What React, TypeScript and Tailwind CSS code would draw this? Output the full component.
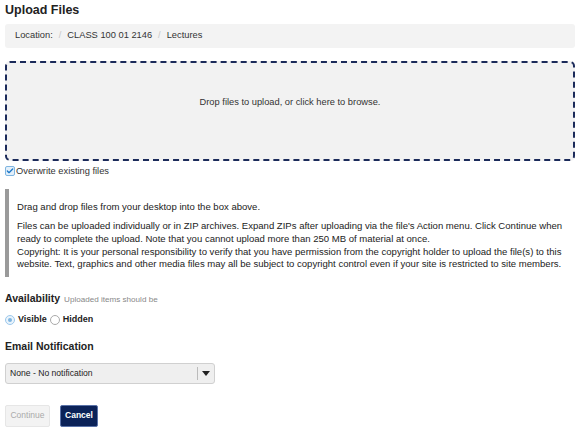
import { Check } from 'lucide-react'

export default function App() {
  return (
    <div className="w-[581px] h-[430px] bg-white px-[5px] pt-[2px] text-[#333] font-['Liberation_Sans',Arial,sans-serif] overflow-hidden">
      {/* Title */}
      <h1 className="text-[12.5px] font-bold text-[#222] leading-[16px]">Upload Files</h1>

      {/* Breadcrumb */}
      <div className="mt-[6px] h-[24px] w-[570px] bg-[#f3f3f3] rounded-[3px] flex items-center pl-[10px] text-[9.3px] text-[#333]">
        <span>Location:</span>
        <span className="mx-[6px] text-[#c8c8c8]">/</span>
        <span>CLASS 100 01 2146</span>
        <span className="mx-[6px] text-[#c8c8c8]">/</span>
        <span>Lectures</span>
      </div>

      {/* Dropzone */}
      <div className="mt-[13px] h-[100px] w-[570px] bg-[#f2f2f2] border-2 border-dashed border-[#1b2a5a] rounded-[5px] flex items-start justify-center pt-[34px] text-[9.3px] leading-[11px] text-[#333]">
        Drop files to upload, or click here to browse.
      </div>

      {/* Overwrite */}
      <label className="mt-[4px] flex items-center text-[9.3px] text-[#333] leading-[12px]">
        <span className="w-[10px] h-[10px] border border-[#7fb5e0] bg-[#e3f0fb] rounded-[2px] flex items-center justify-center mr-[1px]">
          <Check className="w-[10px] h-[10px] text-[#1e78c8]" strokeWidth={4} />
        </span>
        Overwrite existing files
      </label>

      {/* Instructions */}
      <div className="mt-[12px] border-l-[4px] border-[#9a9a9a] pl-[8px] pt-[11.5px] pb-[5.5px] text-[9.55px] leading-[12.7px] text-[#222]">
        <p>Drag and drop files from your desktop into the box above.</p>
        <p className="mt-[7px]">
          Files can be uploaded individually or in ZIP archives. Expand ZIPs after uploading via the file's Action menu. Click Continue when ready to complete the upload. Note that you cannot upload more than 250 MB of material at once.
        </p>
        <p>
          Copyright: It is your personal responsibility to verify that you have permission from the copyright holder to upload the file(s) to this website. Text, graphics and other media files may all be subject to copyright control even if your site is restricted to site members.
        </p>
      </div>

      {/* Availability */}
      <div className="mt-[15.5px] flex items-baseline gap-[4px] leading-[13px]">
        <span className="text-[10.5px] font-bold text-[#222]">Availability</span>
        <span className="text-[8.1px] text-[#888]">Uploaded items should be</span>
      </div>
      <div className="mt-[7.5px] h-[12px] flex items-center text-[9px] font-bold text-[#222]">
        <span className="w-[10px] h-[10px] rounded-full border border-[#9cc8ec] bg-[#eaf4fc] flex items-center justify-center mr-[3px]">
          <span className="w-[4px] h-[4px] rounded-full bg-[#7fb5e0]" />
        </span>
        <span>Visible</span>
        <span className="w-[10px] h-[10px] rounded-full border border-[#aaa] bg-white ml-[3px] mr-[3px]" />
        <span>Hidden</span>
      </div>

      {/* Email Notification */}
      <h2 className="mt-[14.5px] text-[10.5px] font-bold text-[#222] leading-[13px]">Email Notification</h2>
      <div className="mt-[9.5px] w-[210px] h-[21px] bg-[#efefef] border border-[#d0d0d0] rounded-[3px] flex items-center text-[8.6px] text-[#222]">
        <span className="flex-1 pl-[4px]">None - No notification</span>
        <span className="w-px h-[13px] bg-[#bbb]" />
        <span className="w-[16px] flex items-center justify-center">
          <svg width="8" height="5" viewBox="0 0 8 5"><path d="M0 0h8L4 5z" fill="#222" /></svg>
        </span>
      </div>

      {/* Buttons */}
      <div className="mt-[21px] flex gap-[10px]">
        <button className="h-[22px] w-[45px] bg-[#f3f3f3] border border-[#e6e6e6] rounded-[2px] text-[8.5px] text-[#aaa]">Continue</button>
        <button className="h-[22px] w-[38px] bg-[#0b2258] border border-[#5a72a8] rounded-[2px] text-[8.5px] font-bold text-white">Cancel</button>
      </div>
    </div>
  )
}
